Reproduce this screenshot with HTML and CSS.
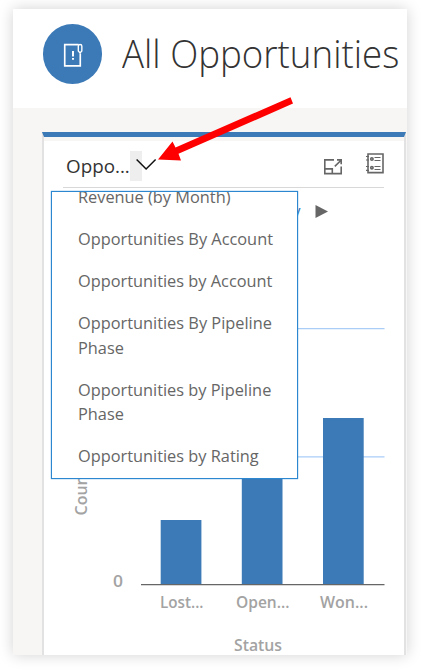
FILE: index.html
```html
<!DOCTYPE html>
<html lang="en">
<head>
<meta charset="utf-8">
<title>All Opportunities</title>
<link rel="stylesheet" href="styles.css">
</head>
<body>
<main class="window">
  <header class="page-header">
    <span class="entity-icon">
      <svg width="59" height="59" viewBox="0 0 60 60" fill="none" stroke="#fff" stroke-width="1.7">
        <path d="M36.2 20.9H22.1V42.5H37.9V30"/>
        <path d="M35.9 22.4c0-2 3.600-2 3.600 0v5l-1.800 2.100-1.800-2.100z" stroke-width="1.4"/>
        <path d="M30.5 27.5v5.500M30.5 34.600v1.800" stroke-width="2"/>
      </svg>
    </span>
    <h1><span class="title-text">All Opportunities</span></h1>
  </header>
  <section class="workspace">
    <article class="card">
      <div class="card-header">
        <h2><span class="card-title">Oppo...</span></h2>
        <button class="chart-toggle" aria-label="Select chart">
          <svg width="29" height="30" viewBox="0 0 29 30" fill="none" stroke="#111" stroke-width="1.500"><path d="M6.600 8.500l9.500 9.500 9.500-9.500"/></svg>
        </button>
        <div class="tools">
          <svg class="expand" width="18" height="16" viewBox="0 0 18 16" fill="none" stroke="#666" stroke-width="1.600">
            <path d="M10 .9H.8v13.700h16.400V7.500M.8 9.900h7.500v4.700M10.800 7.300l6-5.800M13 .9h4.200v4.400"/>
          </svg>
          <svg class="records" width="18" height="21" viewBox="0 0 18 21" fill="none" stroke="#666" stroke-width="1.600">
            <path d="M2 1h15v18.600H2z"/>
            <path d="M0 3.500h3M0 7h3M0 13.500h3M0 17.300h3" stroke-width="1.200"/>
            <circle cx="5.900" cy="6" r="1.200"/><circle cx="5.900" cy="14.700" r="1.200"/>
            <path d="M8.500 4.500h6M8.500 7.500h6M8.500 13.500h6M8.500 16.500h6" stroke-width="1.200"/>
          </svg>
        </div>
      </div>
      <svg class="chart" width="361" height="467" viewBox="44 188 361 467">
        <text class="breadcrumb" x="300.500" y="217" text-anchor="end">y</text>
        <path d="M315.500 205v13l12.500-6.500z" fill="#666"/>
        <path class="grid" d="M141 328.600H384.500M141 456.900H384.500"/>
        <g class="bars">
          <rect x="160.700" y="520" width="40.700" height="64.500"/>
          <rect x="241.800" y="456.500" width="40.700" height="128"/>
          <rect x="323" y="418" width="40.700" height="166.500"/>
        </g>
        <path class="axis" d="M141 584.600H384.500"/>
        <g class="labels">
          <text x="113" y="587" textLength="10" lengthAdjust="spacingAndGlyphs">0</text>
          <text x="160" y="607.600" textLength="43.500" lengthAdjust="spacingAndGlyphs">Lost...</text>
          <text x="236" y="607.600" textLength="53.500" lengthAdjust="spacingAndGlyphs">Open...</text>
          <text x="320" y="607.600" textLength="48" lengthAdjust="spacingAndGlyphs">Won...</text>
          <text x="234" y="651" textLength="48" lengthAdjust="spacingAndGlyphs">Status</text>
          <text class="y-title" transform="translate(87 515.500) rotate(-90)" textLength="51" lengthAdjust="spacingAndGlyphs">Count:</text>
        </g>
      </svg>
    </article>
  </section>
</main>
<div class="menu">
  <ul>
    <li>Revenue (by Month)</li>
    <li>Opportunities By Account</li>
    <li>Opportunities by Account</li>
    <li>Opportunities By Pipeline Phase</li>
    <li>Opportunities by Pipeline Phase</li>
    <li>Opportunities by Rating</li>
  </ul>
</div>
<svg class="pointer" width="136" height="66" viewBox="158 96 136 66"><path d="M158 159.500L172.500 141.500 175.500 147.500 290.500 97.300 293 103.500 178.500 153.800 181 160.500z" fill="#f00"/></svg>
</body>
</html>
```
FILE: styles.css
```css
* { box-sizing: border-box; }
body {
  margin: 0;
  height: 671px;
  padding: 9px 14px 16px 13px;
  overflow: hidden;
  background: #fff;
  font-family: "Open Sans", "Noto Sans", sans-serif;
  color: #333;
}
.window {
  width: 394px;
  height: 646px;
  overflow: hidden;
  display: flex;
  flex-direction: column;
  background: #f7f6f5;
  box-shadow: 0 0 14px rgba(0, 0, 0, .18);
}
.page-header {
  height: 99px;
  padding: 15px 0 0 29.5px;
  display: flex;
  gap: 20px;
  background: #fff;
}
.entity-icon {
  width: 59.5px;
  height: 59.5px;
  border-radius: 50%;
  background: #3b79b7;
}
.entity-icon svg, .chart-toggle svg, .chart { display: block; }
h1, h2 { margin: 0; white-space: nowrap; }
h1 {
  width: 278px;
  font-size: 38px;
  line-height: 59px;
  font-weight: 300;
}
.title-text, .card-title {
  display: inline-block;
  transform-origin: left center;
}
.title-text { transform: scaleX(.965); }
.workspace { flex: 1; padding: 24px 0 0 29px; }
.card {
  width: 364px;
  height: 523px;
  background: linear-gradient(#f7f6f5 4px, #fff 4px);
  border-top: 5px solid #3b79b7;
  border-left: 2px solid #e2e2e2;
  border-right: 2px solid #e2e2e2;
}
.card-header {
  height: 50.5px;
  margin: 0 20px 0 19px;
  padding: 14px 0 0 3px;
  display: flex;
  border-bottom: 1px solid #d8d8d8;
}
.chart { margin-top: .5px; }
h2 {
  width: 64px;
  font-size: 19px;
  line-height: 30px;
  font-weight: 400;
}
.card-title { transform: scaleX(.99); }
.chart-toggle {
  width: 29px;
  height: 30px;
  padding: 0;
  border: 0;
  background: linear-gradient(90deg, #eee 12px, transparent 12px);
}
.tools {
  margin-left: auto;
  display: flex;
  gap: 24px;
}
.tools .expand { margin-top: 8px; }
.tools .records { margin-top: 2px; }
.grid { stroke: #a9cdf7; stroke-width: 1.3; }
.axis { stroke: #666; stroke-width: 1.3; }
.bars { fill: #3b79b7; }
.labels { fill: #a3a3a3; font-size: 16px; font-weight: 600; }
.breadcrumb { fill: #3b79b7; font-size: 16px; }
.menu {
  position: absolute;
  left: 51px;
  top: 191px;
  width: 247px;
  height: 288px;
  overflow: hidden;
  border: 1.5px solid #2c86d0;
  background: #fff;
  box-shadow: 0 0 1px #2c86d0;
}
.menu ul {
  width: 216px;
  margin: -15.5px 0 0 26px;
  padding: 0;
  list-style: none;
  transform: scaleX(.99);
  transform-origin: left center;
}
.menu li {
  padding: 8.75px 0;
  font-size: 16.5px;
  line-height: 24.5px;
  color: #666;
}
.pointer { position: absolute; left: 158px; top: 96px; }
```
